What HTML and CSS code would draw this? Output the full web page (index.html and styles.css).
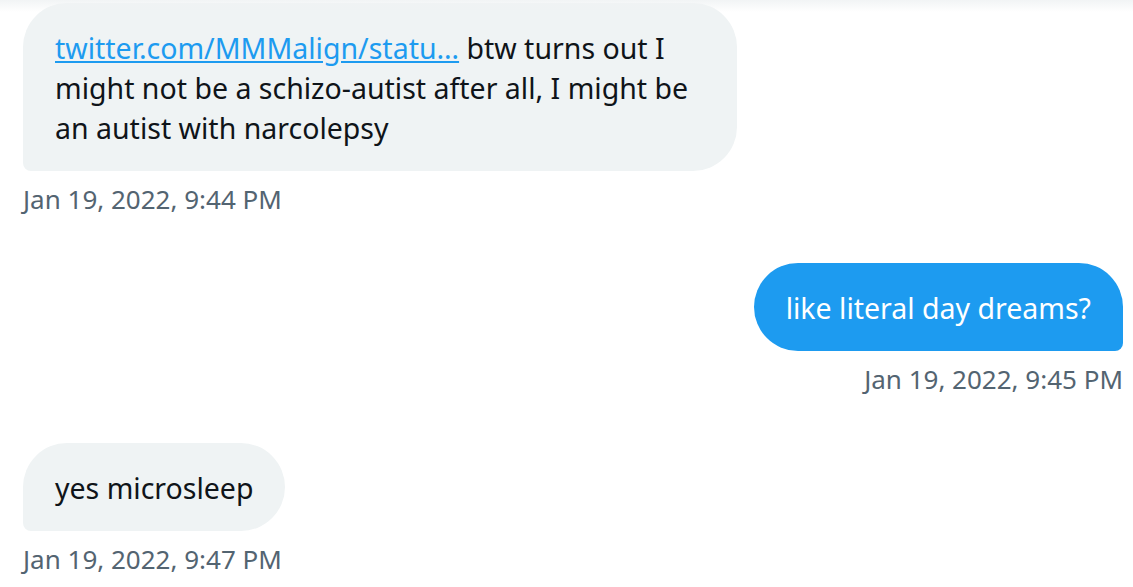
FILE: index.html
```html
<!DOCTYPE html>
<html lang="en">

<head>
    <meta charset="UTF-8">
    <meta name="viewport" content="width=device-width, initial-scale=1.0">
    <title>Messages</title>
    <link rel="stylesheet" href="styles.css">
</head>

<body>
    <div class="top-fade"></div>
    <section class="conversation">
        <div class="entry received">
            <div class="bubble">
                <a href="#">twitter.com/MMMalign/statu…</a> btw turns out I might not be a schizo-autist after all, I might be an autist with narcolepsy
            </div>
            <div class="time">Jan 19, 2022, 9:44 PM</div>
        </div>
        <div class="entry sent">
            <div class="bubble">like literal day dreams?</div>
            <div class="time">Jan 19, 2022, 9:45 PM</div>
        </div>
        <div class="entry received">
            <div class="bubble">yes microsleep</div>
            <div class="time">Jan 19, 2022, 9:47 PM</div>
        </div>
    </section>
</body>

</html>
```

FILE: styles.css
```css
body {
    margin: 0;
    background: #fff;
    font-family: "Noto Sans", "Open Sans", sans-serif;
    color: #0f1419;
    overflow: hidden;
}

.top-fade {
    position: absolute;
    top: 0;
    left: 0;
    right: 0;
    height: 12px;
    background: linear-gradient(rgba(240, 243, 244, 0.9), rgba(255, 255, 255, 0));
}

.conversation {
    display: flex;
    flex-direction: column;
    gap: 49px;
    padding: 3px 10px 0 23px;
}

.entry {
    display: flex;
    flex-direction: column;
}

.received {
    align-items: flex-start;
}

.sent {
    align-items: flex-end;
}

.bubble {
    font-size: 28.5px;
    line-height: 40px;
    padding: 25px 32px 23px;
    border-radius: 44px;
    max-width: 650px;
}

.received .bubble {
    background: #eff3f4;
    border-bottom-left-radius: 8px;
}

.sent .bubble {
    background: #1d9bf0;
    color: #fff;
    border-bottom-right-radius: 8px;
}

.bubble a {
    color: #1d9bf0;
    text-decoration: underline;
}

.time {
    font-size: 26px;
    line-height: 30px;
    padding-top: 13px;
    color: #536471;
}
```
